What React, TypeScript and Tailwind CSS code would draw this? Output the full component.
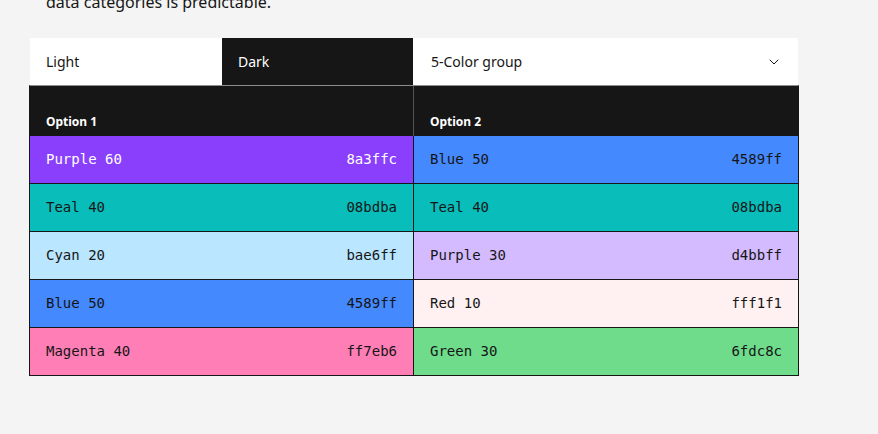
import React from 'react';
import { ChevronDown } from 'lucide-react';

const sans = { fontFamily: '"Noto Sans", "Open Sans", sans-serif' };
const mono = { fontFamily: '"DejaVu Sans Mono", "Liberation Mono", monospace' };

type Swatch = { name: string; hex: string; dark?: boolean };

const option1: Swatch[] = [
  { name: 'Purple 60', hex: '8a3ffc', dark: true },
  { name: 'Teal 40', hex: '08bdba' },
  { name: 'Cyan 20', hex: 'bae6ff' },
  { name: 'Blue 50', hex: '4589ff' },
  { name: 'Magenta 40', hex: 'ff7eb6' },
];

const option2: Swatch[] = [
  { name: 'Blue 50', hex: '4589ff' },
  { name: 'Teal 40', hex: '08bdba' },
  { name: 'Purple 30', hex: 'd4bbff' },
  { name: 'Red 10', hex: 'fff1f1' },
  { name: 'Green 30', hex: '6fdc8c' },
];

const bg: Record<string, string> = {
  '8a3ffc': 'bg-[#8a3ffc]',
  '08bdba': 'bg-[#08bdba]',
  bae6ff: 'bg-[#bae6ff]',
  '4589ff': 'bg-[#4589ff]',
  ff7eb6: 'bg-[#ff7eb6]',
  d4bbff: 'bg-[#d4bbff]',
  fff1f1: 'bg-[#fff1f1]',
  '6fdc8c': 'bg-[#6fdc8c]',
};

function Cell({ s, divider }: { s: Swatch; divider?: boolean }) {
  return (
    <div
      className={`h-[47px] flex items-center justify-between px-4 text-[14px] ${bg[s.hex]} ${
        s.dark ? 'text-white' : 'text-[#161616]'
      } ${divider ? 'border-r border-[#161616]' : ''}`}
      style={mono}
    >
      <span>{s.name}</span>
      <span>{s.hex}</span>
    </div>
  );
}

export default function App() {
  return (
    <div className="min-h-[434px] bg-[#f4f4f4] overflow-hidden" style={sans}>
      <p className="ml-[46px] -mt-[10px] text-[16px] leading-6 text-[#161616]">
        data categories is predictable.
      </p>

      <div className="ml-[30px] mt-[24px] w-[768px]">
        <div className="flex h-[47px] text-[14px]">
          <div className="w-[192px] bg-white text-[#161616] flex items-center px-4">Light</div>
          <div className="w-[191px] bg-[#161616] text-white flex items-center px-4">Dark</div>
          <div className="flex-1 bg-white text-[#161616] flex items-center justify-between pl-[18px] pr-[16px]">
            <span>5-Color group</span>
            <ChevronDown className="w-4 h-4" strokeWidth={1.5} />
          </div>
        </div>

        <div className="-mx-px border-x border-b border-[#161616] border-t border-t-[#8d8d8d]">
          <div className="grid grid-cols-[384px_1fr] h-[50px] bg-[#161616] text-white text-[12px] font-bold">
            <div className="border-r border-[#525252] flex items-end px-4 pb-[5px]">Option 1</div>
            <div className="flex items-end px-4 pb-[5px]">Option 2</div>
          </div>
          {option1.map((s, i) => (
            <div
              key={i}
              className={`grid grid-cols-[384px_1fr] ${i > 0 ? 'border-t border-[#161616]' : ''}`}
            >
              <Cell s={s} divider />
              <Cell s={option2[i]} />
            </div>
          ))}
        </div>
      </div>
    </div>
  );
}
